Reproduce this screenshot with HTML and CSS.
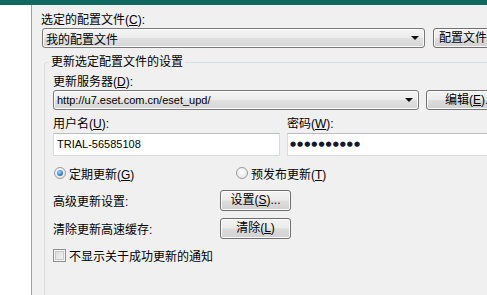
FILE: index.html
```html
<!DOCTYPE html>
<html>
<head>
<meta charset="utf-8">
<link rel="stylesheet" href="styles.css">
</head>
<body>
<div class="titlebar"></div>
<div class="main">
  <div class="sidebar"></div>
  <div class="content">
    <div class="label">选定的配置文件(<u>C</u>):</div>
    <div class="row">
      <div class="combo c1"><span class="val">我的配置文件</span><span class="arrow"></span></div>
      <div class="btn side b1">配置文件(<u>P</u>)...</div>
    </div>
    <fieldset class="group">
      <legend>更新选定配置文件的设置</legend>
      <div class="label">更新服务器(<u>D</u>):</div>
      <div class="row">
        <div class="combo c2"><span class="val url">http://u7.eset.com.cn/eset_upd/</span><span class="arrow"></span></div>
        <div class="btn side b2">编辑(<u>E</u>)...</div>
      </div>
      <div class="creds">
        <div class="field f1">
          <div class="label">用户名(<u>U</u>):</div>
          <div class="textbox">TRIAL-56585108</div>
        </div>
        <div class="field f2">
          <div class="label">密码(<u>W</u>):</div>
          <div class="textbox pw">●●●●●●●●●●</div>
        </div>
      </div>
      <div class="radios">
        <div class="opt o1"><span class="radio on"></span><span>定期更新(<u>G</u>)</span></div>
        <div class="opt o2"><span class="radio"></span><span>预发布更新(<u>T</u>)</span></div>
      </div>
      <div class="setrow s1">
        <div class="setlabel">高级更新设置:</div>
        <div class="btn small">设置(<u>S</u>)...</div>
      </div>
      <div class="setrow s2">
        <div class="setlabel">清除更新高速缓存:</div>
        <div class="btn small">清除(<u>L</u>)</div>
      </div>
      <div class="check"><span class="box"></span><span>不显示关于成功更新的通知</span></div>
    </fieldset>
  </div>
</div>
</body>
</html>
```

FILE: styles.css
```css
html, body {
  margin: 0;
  padding: 0;
}
body {
  width: 487px;
  height: 295px;
  overflow: hidden;
  background: #f0f0f0;
  font-family: "Liberation Sans", "Noto Sans CJK SC", sans-serif;
  font-size: 12px;
  color: #000;
}
u { text-decoration: underline; text-underline-offset: 1px; }
.titlebar {
  height: 5px;
  background: #0e6a60;
}
.main {
  display: flex;
  height: 290px;
}
.sidebar {
  flex: none;
  width: 31px;
  background: #fff;
  border-right: 1px solid #a0a0a0;
}
.content {
  flex: 1;
  min-width: 0;
  padding: 7px 0 0 9px;
  overflow: hidden;
}
.label {
  height: 16px;
  line-height: 16px;
  white-space: nowrap;
}
.row {
  display: flex;
  height: 20px;
}
.combo {
  flex: none;
  display: flex;
  align-items: center;
  box-sizing: border-box;
  height: 20px;
  border: 1px solid #7a7a7a;
  border-radius: 3px;
  background: linear-gradient(#f5f5f5, #ececec 48%, #e0e0e0 52%, #d6d6d6);
  box-shadow: inset 0 0 0 1px #fafafa;
  white-space: nowrap;
}
.c1 {
  width: 383px;
  margin-left: 1px;
  padding-left: 3px;
}
.c2 {
  width: 366px;
  padding-left: 3px;
}
.url { font-size: 11px; }
.arrow {
  margin-left: auto;
  margin-right: 5px;
  width: 0;
  height: 0;
  border-left: 4px solid transparent;
  border-right: 4px solid transparent;
  border-top: 4px solid #111;
}
.btn {
  box-sizing: border-box;
  height: 20px;
  line-height: 18px;
  border: 1px solid #707070;
  border-radius: 3px;
  background: linear-gradient(#f3f3f3, #ebebeb 48%, #dddddd 52%, #d0d0d0);
  box-shadow: inset 0 0 0 1px #fbfbfb;
  white-space: nowrap;
  flex: none;
}
.side {
  width: 90px;
}
.b1 {
  margin-left: 8px;
  padding-left: 5px;
}
.b2 {
  margin-left: 7px;
  padding-left: 18px;
}
.group {
  margin: 6px -30px 0 3px;
  padding: 4px 0 0 8px;
  height: 260px;
  border: 1px solid #d5dfe5;
  border-radius: 3px;
  min-width: 0;
}
.group legend {
  margin-left: -4px;
  padding: 0 2px;
  line-height: 16px;
  height: 16px;
}
.creds {
  display: flex;
  gap: 7px;
  margin-top: 6px;
}
.f1 { width: 227px; flex: none; }
.f2 { flex: 1; }
.textbox {
  box-sizing: border-box;
  height: 23px;
  margin-top: 1px;
  border: 1px solid #d8dce2;
  border-top-color: #b9bcc2;
  background: #fff;
  padding-left: 3px;
  font-size: 11px;
  line-height: 21px;
  white-space: nowrap;
}
.pw {
  font-family: "DejaVu Sans", sans-serif;
  font-size: 7px;
  letter-spacing: 1px;
  color: #10182a;
  padding-left: 2px;
}
.radios {
  display: flex;
  height: 16px;
  margin-top: 9px;
  align-items: center;
}
.opt {
  display: flex;
  align-items: center;
  gap: 3px;
  white-space: nowrap;
}
.o1 { width: 182px; margin-left: 1px; }
.radio {
  box-sizing: border-box;
  width: 12px;
  height: 12px;
  border-radius: 50%;
  border: 1px solid #9a9a9a;
  background: radial-gradient(circle at 50% 40%, #ffffff, #e0e0e0);
  display: flex;
  align-items: center;
  justify-content: center;
}
.radio.on::after {
  content: "";
  width: 6px;
  height: 6px;
  border-radius: 50%;
  background: radial-gradient(circle at 40% 35%, #9fd8ff, #2a6fc0 70%, #1a4f90);
}
.setrow {
  display: flex;
  align-items: center;
  height: 21px;
}
.s1 { margin-top: 9px; }
.s2 { margin-top: 7px; }
.setlabel {
  width: 167px;
  flex: none;
  white-space: nowrap;
}
.small {
  width: 71px;
  height: 21px;
  line-height: 19px;
  text-align: center;
}
.check {
  display: flex;
  align-items: center;
  gap: 3px;
  margin-top: 10px;
  height: 13px;
  white-space: nowrap;
}
.box {
  box-sizing: border-box;
  width: 13px;
  height: 13px;
  border: 1px solid #8f8f8f;
  background: linear-gradient(135deg, #d8d8d8, #f6f6f6);
  box-shadow: inset 0 0 0 1px #f4f4f4, inset 0 0 0 2px #c8c8c8;
}
```
